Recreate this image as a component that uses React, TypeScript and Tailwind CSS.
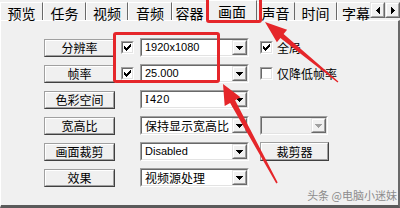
import React from "react";

const CJK = "font-['Noto_Sans_CJK_SC','Noto_Sans',sans-serif]";
const LAT = "font-['Liberation_Sans',Arial,sans-serif]";

function Down({ color = "#000" }: { color?: string }) {
  return (
    <svg width="7" height="4" viewBox="0 0 7 4" shapeRendering="crispEdges">
      <path d="M0 0h7v1h-7zM1 1h5v1h-5zM2 2h3v1h-3zM3 3h1v1h-1z" fill={color} />
    </svg>
  );
}

function Raised({ className = "", children }: { className?: string; children?: React.ReactNode }) {
  return (
    <div className={`border border-t-[#a0a0a0] border-l-[#a0a0a0] border-r-[#404040] border-b-[#404040] bg-[#f0f0f0] ${className}`}>
      <div className="w-full h-full border border-t-white border-l-white border-r-[#a0a0a0] border-b-[#a0a0a0] flex items-center justify-center">
        {children}
      </div>
    </div>
  );
}

function SmallBtn({ className = "", children }: { className?: string; children?: React.ReactNode }) {
  return (
    <div className={`border border-t-[#e3e3e3] border-l-[#e3e3e3] border-r-[#696969] border-b-[#696969] bg-[#f0f0f0] ${className}`}>
      <div className="w-full h-full border border-t-white border-l-white border-r-[#a0a0a0] border-b-[#a0a0a0] flex items-center justify-center">
        {children}
      </div>
    </div>
  );
}

function Combo({
  children,
  className,
  latin = false,
  disabled = false,
}: {
  children?: React.ReactNode;
  className: string;
  latin?: boolean;
  disabled?: boolean;
}) {
  const font = latin ? `${LAT} text-[11px]` : `${CJK} text-[12px]`;
  return (
    <div className={`h-[19px] border border-t-[#a0a0a0] border-l-[#a0a0a0] border-r-white border-b-white ${className}`}>
      <div
        className={`h-full border border-t-[#696969] border-l-[#696969] border-r-[#e3e3e3] border-b-[#e3e3e3] flex items-center ${
          disabled ? "bg-[#f0f0f0]" : "bg-white"
        }`}
      >
        <span className={`flex-1 min-w-0 pl-[3px] leading-[15px] whitespace-nowrap text-black ${font}`}>{children}</span>
        <SmallBtn className="w-[15px] h-[15px] shrink-0">
          <Down color={disabled ? "#a0a0a0" : "#000"} />
        </SmallBtn>
      </div>
    </div>
  );
}

function Check({ checked = false }: { checked?: boolean }) {
  return (
    <div className="w-[13px] h-[13px] shrink-0 border border-t-[#a0a0a0] border-l-[#a0a0a0] border-r-white border-b-white">
      <div className="w-full h-full border border-t-[#696969] border-l-[#696969] border-r-[#e3e3e3] border-b-[#e3e3e3] bg-white flex items-center justify-center">
        {checked && (
          <svg width="7" height="7" viewBox="0 0 7 7" shapeRendering="crispEdges">
            <path
              d="M6 0h1v1h-1zM5 1h2v1h-2zM0 2h1v1h-1zM4 2h3v1h-3zM0 3h2v1h-2zM3 3h3v1h-3zM0 4h5v1h-5zM1 5h3v1h-3zM2 6h1v1h-1z"
              fill="#000"
            />
          </svg>
        )}
      </div>
    </div>
  );
}

function Btn({ label, className = "w-[71px] h-[18px]" }: { label: string; className?: string }) {
  return (
    <Raised className={`shrink-0 ${className}`}>
      <span className={`${CJK} text-[12px] leading-none text-black`}>{label}</span>
    </Raised>
  );
}

const tabs = [
  { t: "预览", c: "w-[43px]" },
  { t: "任务", c: "w-[43px]" },
  { t: "视频", c: "w-[42px]" },
  { t: "音频", c: "w-[44px]" },
  { t: "容器", c: "w-[35px]" },
];
const tabs2 = [
  { t: "声音", c: "w-[38px]" },
  { t: "时间", c: "w-[42px]" },
];

export default function App() {
  return (
    <div className="relative w-[400px] h-[208px] bg-[#f0f0f0] overflow-hidden select-none">
      {/* tab bar */}
      <div className="flex items-start h-[20px]">
        {tabs.map((tb) => (
          <div
            key={tb.t}
            className={`${tb.c} h-[18px] mt-[2px] shrink-0 border-t border-l border-r border-t-white border-l-white border-r-[#696969] flex items-center justify-center pt-[2px] ${CJK} text-[14px] leading-none text-black`}
          >
            {tb.t}
          </div>
        ))}
        <div
          className={`relative z-10 w-[50px] h-[21px] shrink-0 bg-[#f0f0f0] border-t border-l border-r border-t-white border-l-white border-r-[#696969] flex items-center justify-center ${CJK} text-[14px] leading-none text-black`}
        >
          画面
        </div>
        {tabs2.map((tb) => (
          <div
            key={tb.t}
            className={`${tb.c} h-[18px] mt-[2px] shrink-0 border-t border-r border-t-white border-r-[#696969] flex items-center justify-center pt-[2px] ${CJK} text-[14px] leading-none text-black`}
          >
            {tb.t}
          </div>
        ))}
        <div
          className={`w-[33px] h-[18px] mt-[2px] shrink-0 border-t border-l border-t-white border-l-white flex items-center pl-[4px] pt-[2px] ${CJK} text-[14px] leading-none text-black whitespace-nowrap`}
        >
          字幕
        </div>
        <SmallBtn className="w-[15px] h-[16px] mt-[2px] shrink-0">
          <svg width="4" height="7" viewBox="0 0 4 7" shapeRendering="crispEdges">
            <path d="M3 0h1v7h-1zM2 1h1v5h-1zM1 2h1v3h-1zM0 3h1v1h-1z" fill="#000" />
          </svg>
        </SmallBtn>
        <SmallBtn className="w-[15px] h-[16px] mt-[2px] shrink-0">
          <svg width="4" height="7" viewBox="0 0 4 7" shapeRendering="crispEdges">
            <path d="M0 0h1v7h-1zM1 1h1v5h-1zM2 2h1v3h-1zM3 3h1v1h-1z" fill="#000" />
          </svg>
        </SmallBtn>
      </div>

      {/* panel */}
      <div className="h-[188px] border-t border-l border-t-white border-l-white border-r-2 border-r-[#696969] border-b-[3px] border-b-[#5a5a5a] pt-[17px] pl-[43px] flex flex-col gap-[7px]">
        <div className="flex items-center h-[19px]">
          <Btn label="分辨率" />
          <div className="ml-[6px]">
            <Check checked />
          </div>
          <Combo latin className="w-[109px] ml-[6px]">1920x1080</Combo>
          <div className="ml-[11px] flex items-center gap-[4px]">
            <Check checked />
            <span className={`${CJK} text-[12px] leading-none text-black`}>全局</span>
          </div>
        </div>
        <div className="flex items-center h-[19px]">
          <Btn label="帧率" />
          <div className="ml-[6px]">
            <Check checked />
          </div>
          <Combo latin className="w-[109px] ml-[6px]">25.000</Combo>
          <div className="ml-[11px] flex items-center gap-[4px]">
            <Check />
            <span className={`${CJK} text-[12px] leading-none text-black`}>仅降低帧率</span>
          </div>
        </div>
        <div className="flex items-center h-[19px]">
          <Btn label="色彩空间" />
          <Combo latin className="w-[109px] ml-[25px]">
            <span className="font-['Liberation_Serif',serif] text-[12px] mr-[1px]">I</span>
            <span className="tracking-[0.5px]">420</span>
          </Combo>
        </div>
        <div className="flex items-center h-[19px]">
          <Btn label="宽高比" />
          <Combo className="w-[109px] ml-[25px]">保持显示宽高比</Combo>
          <Combo disabled className="w-[68px] ml-[11px]" />
        </div>
        <div className="flex items-center h-[19px]">
          <Btn label="画面裁剪" />
          <Combo latin className="w-[109px] ml-[25px]">Disabled</Combo>
          <Btn label="裁剪器" className="w-[69px] h-[19px] ml-[11px]" />
        </div>
        <div className="flex items-center h-[19px]">
          <Btn label="效果" />
          <Combo className="w-[109px] ml-[25px]">视频源处理</Combo>
        </div>
      </div>

      {/* watermark */}
      <div className={`absolute right-[3px] bottom-[7px] ${CJK} text-[11px] leading-none text-[#8c8c8c] whitespace-nowrap`}>
        头条 @电脑小迷妹
      </div>

      {/* red annotations */}
      <div className="absolute left-[113px] top-[32px] w-[107px] h-[51px] border-[3px] border-[#e5262a] rounded-[3px] pointer-events-none" />
      <div className="absolute left-[206px] top-[-3px] w-[56px] h-[26px] border-[3px] border-[#e5262a] rounded-[3px] pointer-events-none z-20" />
      <svg className="absolute left-0 top-0 pointer-events-none z-20" width="400" height="208" viewBox="0 0 400 208">
        <polygon
          points="265,22 287.1,29.8 283.6,34.1 338.4,81.5 337.6,82.5 280.4,37.9 276.9,42.2"
          fill="#e5262a"
        />
        <polygon
          points="223,84 240.5,97.3 235.1,100.3 277.7,182.6 276.3,183.4 230.1,102.9 224.7,105.9"
          fill="#e5262a"
        />
      </svg>
    </div>
  );
}
